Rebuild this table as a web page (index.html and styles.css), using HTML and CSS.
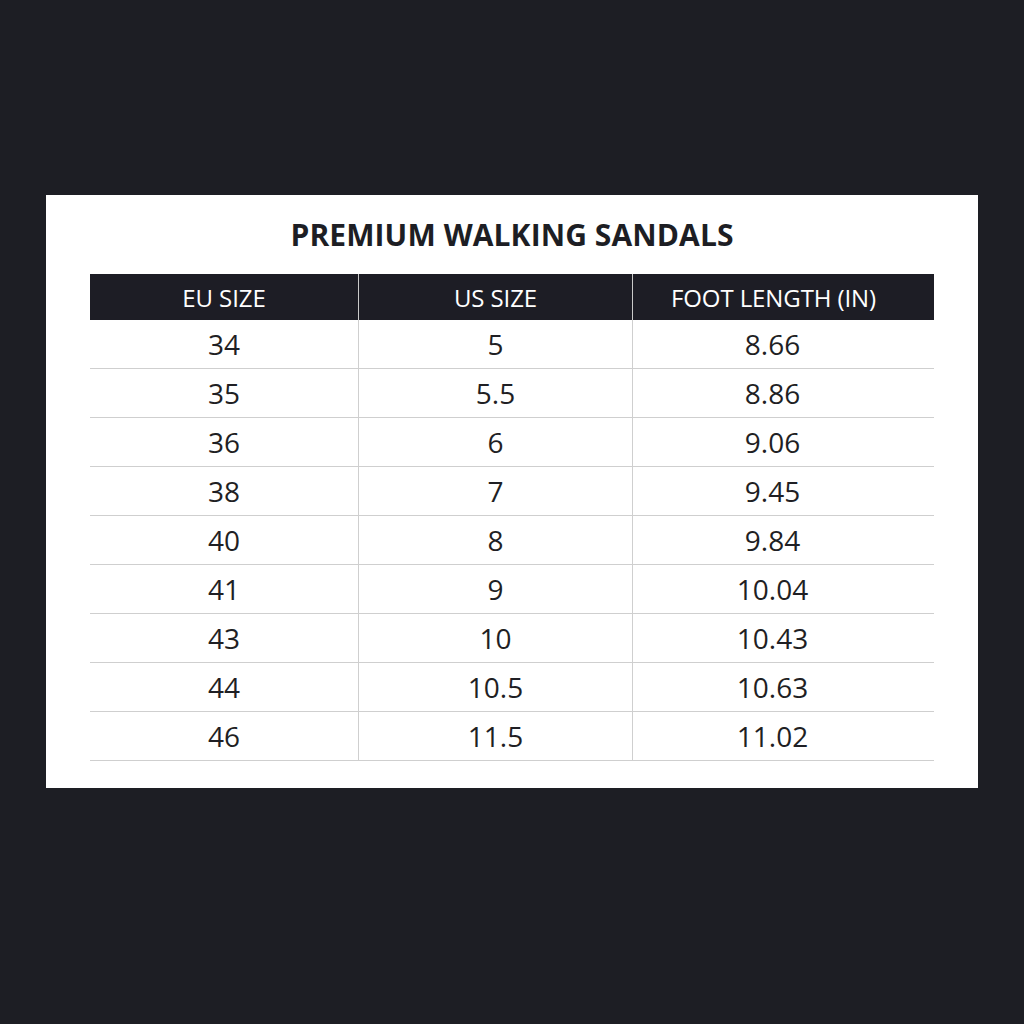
FILE: index.html
```html
<!DOCTYPE html>
<html>
<head>
<meta charset="utf-8">
<link rel="stylesheet" href="styles.css">
</head>
<body>
<div class="card">
  <h1 class="title">PREMIUM WALKING SANDALS</h1>
  <table class="chart">
    <thead>
      <tr><th class="c1">EU SIZE</th><th class="c2">US SIZE</th><th class="c3">FOOT LENGTH (IN)</th></tr>
    </thead>
    <tbody>
      <tr><td>34</td><td>5</td><td>8.66</td></tr>
      <tr><td>35</td><td>5.5</td><td>8.86</td></tr>
      <tr><td>36</td><td>6</td><td>9.06</td></tr>
      <tr><td>38</td><td>7</td><td>9.45</td></tr>
      <tr><td>40</td><td>8</td><td>9.84</td></tr>
      <tr><td>41</td><td>9</td><td>10.04</td></tr>
      <tr><td>43</td><td>10</td><td>10.43</td></tr>
      <tr><td>44</td><td>10.5</td><td>10.63</td></tr>
      <tr><td>46</td><td>11.5</td><td>11.02</td></tr>
    </tbody>
  </table>
</div>
</body>
</html>
```
FILE: styles.css
```css
html, body {
  margin: 0;
  padding: 0;
  background: #1d1e24;
  width: 1024px;
  height: 1024px;
}
body {
  padding-top: 195px;
  padding-left: 46px;
  box-sizing: border-box;
  font-family: "Open Sans", "Noto Sans", sans-serif;
}
.card {
  width: 932px;
  height: 593px;
  background: #ffffff;
  box-sizing: border-box;
  padding: 18px 44px 0 44px;
}
.title {
  margin: 0;
  text-align: center;
  font-size: 30px;
  font-weight: 700;
  color: #1d1e24;
  letter-spacing: 0.1px;
  line-height: 44px;
  height: 61px;
}
.chart {
  width: 844px;
  border-collapse: collapse;
  table-layout: fixed;
}
.chart th {
  background: #1d1d25;
  color: #ffffff;
  font-weight: 400;
  font-size: 24px;
  letter-spacing: -0.1px;
  height: 46px;
  padding: 0;
  text-align: center;
}
.chart th.c1 { width: 268px; }
.chart th.c2 { width: 273px; border-left: 1px solid #c9c9c9; }
.chart th.c3 { width: 281px; border-left: 1px solid #c9c9c9; padding-right: 20px; }
.chart td {
  height: 48px;
  padding: 0;
  text-align: center;
  font-size: 28px;
  color: #1f1f24;
  border-bottom: 1px solid #cfcfcf;
}
.chart td + td {
  border-left: 1px solid #cfcfcf;
}
.chart td:last-child {
  padding-right: 22px;
}
```
